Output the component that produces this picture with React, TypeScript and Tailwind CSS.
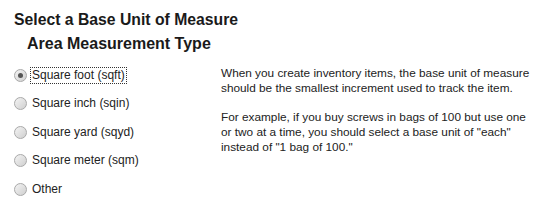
import React from "react";

const options = [
  "Square foot (sqft)",
  "Square inch (sqin)",
  "Square yard (sqyd)",
  "Square meter (sqm)",
  "Other",
];

function Radio({ checked }: { checked?: boolean }) {
  return (
    <span className="relative shrink-0 w-[13px] h-[13px] rounded-full border border-[#a9a9a9] bg-gradient-to-br from-[#f4f4f4] to-[#cfcfcf] flex items-center justify-center">
      {checked && <span className="w-[5px] h-[5px] rounded-full bg-[#555]" />}
    </span>
  );
}

export default function App() {
  return (
    <div className="w-[545px] h-[219px] bg-white text-[#222] font-['Liberation_Sans',Arial,sans-serif] overflow-hidden">
      <h1 className="pl-[14px] pt-[10px] text-[15.75px] font-bold leading-[20px] text-[#1a1a1a]">
        Select a Base Unit of Measure
      </h1>
      <h2 className="pl-[27px] pt-[4px] text-[16px] font-bold leading-[20px] text-[#1a1a1a]">
        Area Measurement Type
      </h2>
      <div className="flex mt-[7px]">
        <div className="flex flex-col pl-[14px] w-[221px]">
          {options.map((o, i) => (
            <label key={o} className="flex items-center gap-[4px] h-[28.5px] text-[12px]">
              <Radio checked={i === 0} />
              <span className={i === 0 ? "outline outline-1 outline-dotted outline-[#333] px-[1px] leading-[15px]" : "px-[1px] leading-[15px]"}>
                {o}
              </span>
            </label>
          ))}
        </div>
        <div className="pt-[5px] text-[11.8px] leading-[15px] text-[#222] whitespace-nowrap">
          <p>
            When you create inventory items, the base unit of measure
            <br />
            should be the smallest increment used to track the item.
          </p>
          <p className="mt-[14px]">
            For example, if you buy screws in bags of 100 but use one
            <br />
            or two at a time, you should select a base unit of "each"
            <br />
            instead of "1 bag of 100."
          </p>
        </div>
      </div>
    </div>
  );
}
